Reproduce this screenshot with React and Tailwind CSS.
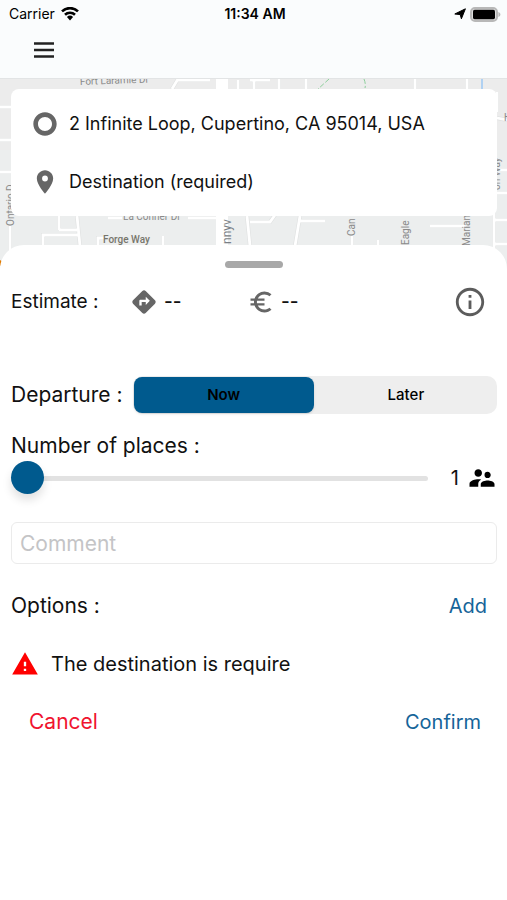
import React, { useState } from 'react';
import {
  MdDirections,
  MdEuroSymbol,
  MdInfoOutline,
  MdPlace,
  MdSupervisorAccount,
  MdTripOrigin,
  MdWarning,
} from 'react-icons/md';

const StatusBar = () => (
  <div className="grid h-7 grid-cols-3 items-center pl-[9px] pr-1.5 text-sm text-black">
    <div className="flex items-center gap-1.5">
      <span>Carrier</span>
      <svg viewBox="0 0 18 14" className="h-3.5 w-[18px]" fill="none" stroke="#000" strokeWidth="2.6">
        <path d="M1 4.4a11.4 11.4 0 0 1 16 0" />
        <path d="M4 7.8a7.2 7.2 0 0 1 10 0" />
        <path d="M9 13.400 5.900 10a4.500 4.500 0 0 1 6.200 0z" fill="#000" stroke="none" />
      </svg>
    </div>
    <div className="text-center font-semibold">11:34 AM</div>
    <div className="flex items-center justify-end gap-1">
      <svg viewBox="0 0 12 12" className="h-3 w-3">
        <path d="M11.400.8 7.400 10.800 6.200 6.600.8 6z" fill="#000" stroke="#000" strokeWidth="1" strokeLinejoin="round" />
      </svg>
      <svg viewBox="0 0 31 15" className="h-[15px] w-[31px]">
        <rect x="1" y="1" width="26" height="13" rx="4" fill="#ddd" stroke="#b8b8b8" strokeWidth="2" />
        <rect x="3" y="2.800" width="22" height="9.400" rx="1.600" fill="#000" />
        <path d="M28.400 5c1.300.4 2 1.400 2 2.500s-.7 2.100-2 2.500z" fill="#b8b8b8" />
      </svg>
    </div>
  </div>
);

const MapBackground = () => (
  <svg
    className="absolute inset-0 h-full w-full"
    viewBox="0 79 507 191"
    preserveAspectRatio="xMidYMin slice"
    aria-hidden="true"
  >
    <rect x="0" y="79" width="507" height="191" fill="#ececec" />
    <rect x="0" y="150" width="507" height="120" fill="#eceeee" />

    {/* rues */}
    <g fill="none" stroke="#dfe1e1" strokeWidth="4">
      <path d="M0 107h12M0 140h12M0 172h12M10 226v30M59 216v14M59 230h18M77 216l3 30M43 246v-11h35" />
      <path d="M172 89l6-10M178 80h32M238 80v10M250 80h20" />
      <path d="M254 79v12M279 79v12M306 79v12M415 79v12M467 79v12" />
      <path d="M247 216l3 30M250 222h20l5-7M300 216l-5 30M300 221h25M352 236v10M378 240v6M430 226h36" />
      <path d="M494 210v50M494 193h13M494 220h13M494 244h13M497 170h10M497 118l10 2M497 92v20" />
      <path d="M98 246v-8h6M163 246v-10M108 218h14M188 218h28" />
    </g>
    <g fill="none" stroke="#fff" strokeWidth="2.800">
      <path d="M0 107h12M0 140h12M0 172h12M10 226v30M59 216v14M59 230h18M77 216l3 30M43 246v-11h35" />
      <path d="M172 89l6-10M178 80h32M238 80v10M250 80h20" />
      <path d="M254 79v12M279 79v12M306 79v12M415 79v12M467 79v12" />
      <path d="M247 216l3 30M250 222h20l5-7M300 216l-5 30M300 221h25M352 236v10M378 240v6M430 226h36" />
      <path d="M494 210v50M494 193h13M494 220h13M494 244h13M497 170h10M497 118l10 2M497 92v20" />
      <path d="M98 246v-8h6M163 246v-10M108 218h14M188 218h28" />
    </g>
    <path d="M222 79v12M222 214v34" stroke="#fff" strokeWidth="12" />
    <path d="M329 79l-12 11M364 79q2 5 1 9" stroke="#8ccf9b" fill="none" strokeDasharray="5 2" />
    <path d="M482 79v10" stroke="#9cc8f5" strokeWidth="1.500" />
    <circle cx="-1" cy="263" r="3" fill="#e07b00" />

    {/* noms des rues */}
    <g fontFamily="Roboto, sans-serif" fontSize="10" fill="#8a8a8a">
      <text x="80" y="85" transform="rotate(-2 80 85)">Fort Laramie Dr</text>
      <text x="123" y="220">La Conner Dr</text>
      <text x="103" y="243" fontWeight="500" fill="#77756b">Forge Way</text>
      <text transform="translate(14 226) rotate(-90)">Ontario D</text>
      <text transform="translate(231 244) rotate(-90)" fontSize="12" fill="#7a7f85">nnyv</text>
      <text transform="translate(355 236) rotate(-90)">Can</text>
      <text transform="translate(409 245) rotate(-90)">Eagle</text>
      <text transform="translate(470 246) rotate(-90)">Marian</text>
      <text transform="translate(500 190) rotate(-90)">on Way</text>
      <text x="504" y="121">H</text>
    </g>
  </svg>
);

const AddressRow = ({ icon, text }) => (
  <button type="button" className="flex h-[58px] w-full items-center gap-2.5 text-left">
    {icon}
    <span className="whitespace-nowrap">{text}</span>
  </button>
);

const App = () => {
  const [departure, setDeparture] = useState('now');
  const [places, setPlaces] = useState(1);
  const [comment, setComment] = useState('');

  const activeSegment = 'm-px flex-1 rounded-lg bg-[#005a8e] font-semibold text-black shadow-sm';
  const segment = 'm-px flex-1 rounded-lg font-medium text-black';

  return (
    <div className="flex min-h-screen flex-col bg-white font-[Inter,sans-serif] text-[#111]">
      <header className="border-b border-[#e2e4e5] bg-[#fafcfd] pb-3.5">
        <StatusBar />
        <button type="button" aria-label="Menu" className="ml-[30px] mt-2 block text-[#222]">
          <svg viewBox="0 0 28 28" className="h-7 w-7" stroke="currentColor" strokeWidth="2.400">
            <path d="M4 7.500h20M4 14h20M4 20.500h20" />
          </svg>
        </button>
      </header>

      <section className="relative pb-[54px] pl-[11px] pr-2.5 pt-2.5">
        <MapBackground />
        <div className="relative rounded-lg bg-white px-5 pb-[5px] pt-1.5 text-lg">
          <AddressRow
            icon={<MdTripOrigin size={28} className="shrink-0 text-[#666]" />}
            text="2 Infinite Loop, Cupertino, CA 95014, USA"
          />
          <AddressRow
            icon={<MdPlace size={28} className="shrink-0 text-[#666]" />}
            text="Destination (required)"
          />
        </div>
      </section>

      <main className="relative -mt-[25px] flex-1 rounded-t-3xl bg-white pl-[11px] pr-2.5 pt-4 text-[21px] leading-7">
        <div className="mx-auto h-[7px] w-[58px] rounded-full bg-[#a8a8a8]" />

        {/* Estimation */}
        <div className="mt-[18px] flex h-8 items-center text-[19px]">
          <span className="w-[119px]">Estimate :</span>
          <div className="flex w-[117px] items-center gap-1.5">
            <MdDirections size={28} className="text-[#666]" />
            <span className="font-medium">--</span>
          </div>
          <div className="flex items-center gap-1.5">
            <MdEuroSymbol size={28} className="text-[#666]" />
            <span className="font-medium">--</span>
          </div>
          <button type="button" aria-label="Information" className="ml-auto mr-2.5 text-[#5c5c5c]">
            <MdInfoOutline size={34} />
          </button>
        </div>

        {/* Départ */}
        <div className="mt-[58px] flex items-center gap-2.5">
          <span className="whitespace-nowrap">Departure :</span>
          <div className="flex h-[38px] flex-1 rounded-[10px] bg-[#eee] text-[15px]">
            <button
              type="button"
              aria-pressed={departure === 'now'}
              onClick={() => setDeparture('now')}
              className={departure === 'now' ? activeSegment : segment}
            >
              Now
            </button>
            <button
              type="button"
              aria-pressed={departure === 'later'}
              onClick={() => setDeparture('later')}
              className={departure === 'later' ? activeSegment : segment}
            >
              Later
            </button>
          </div>
        </div>

        {/* Nombre de places */}
        <label htmlFor="places" className="mt-[18px] block">
          Number of places :
        </label>
        <div className="flex h-9 items-center">
          <input
            id="places"
            type="range"
            min="1"
            max="8"
            value={places}
            onChange={(e) => setPlaces(Number(e.target.value))}
            className="h-[33px] min-w-0 flex-1 appearance-none bg-transparent [&::-webkit-slider-runnable-track]:h-[5px] [&::-webkit-slider-runnable-track]:rounded-full [&::-webkit-slider-runnable-track]:bg-[#e2e2e2] [&::-webkit-slider-thumb]:-mt-[15px] [&::-webkit-slider-thumb]:h-[33px] [&::-webkit-slider-thumb]:w-[33px] [&::-webkit-slider-thumb]:appearance-none [&::-webkit-slider-thumb]:rounded-full [&::-webkit-slider-thumb]:bg-[#005a8e] [&::-webkit-slider-thumb]:shadow-[0_6px_10px_rgba(0,0,0,0.12)]"
          />
          <div className="flex w-[69px] items-center justify-end gap-2">
            <span className="text-xl">{places}</span>
            <MdSupervisorAccount size={30} className="text-black" />
          </div>
        </div>

        <input
          type="text"
          aria-label="Comment"
          placeholder="Comment"
          value={comment}
          onChange={(e) => setComment(e.target.value)}
          className="mt-[26px] block h-[42px] w-full rounded-md border border-[#ebebeb] px-2 placeholder:text-[#c4c4c6]"
        />

        {/* Options */}
        <div className="mt-7 flex items-center justify-between">
          <span>Options :</span>
          <button type="button" className="mr-2.5 text-xl leading-7 text-[#156499]">
            Add
          </button>
        </div>

        <p className="mt-[30px] flex items-center gap-3 text-xl leading-7">
          <MdWarning size={28} className="text-[#f00]" />
          The destination is require
        </p>

        <div className="mt-[30px] flex items-center justify-between pl-[18px] pr-4">
          <button type="button" className="text-[#f0142f]">
            Cancel
          </button>
          <button type="button" className="text-xl leading-7 text-[#156499]">
            Confirm
          </button>
        </div>
      </main>
    </div>
  );
};

export default App;
